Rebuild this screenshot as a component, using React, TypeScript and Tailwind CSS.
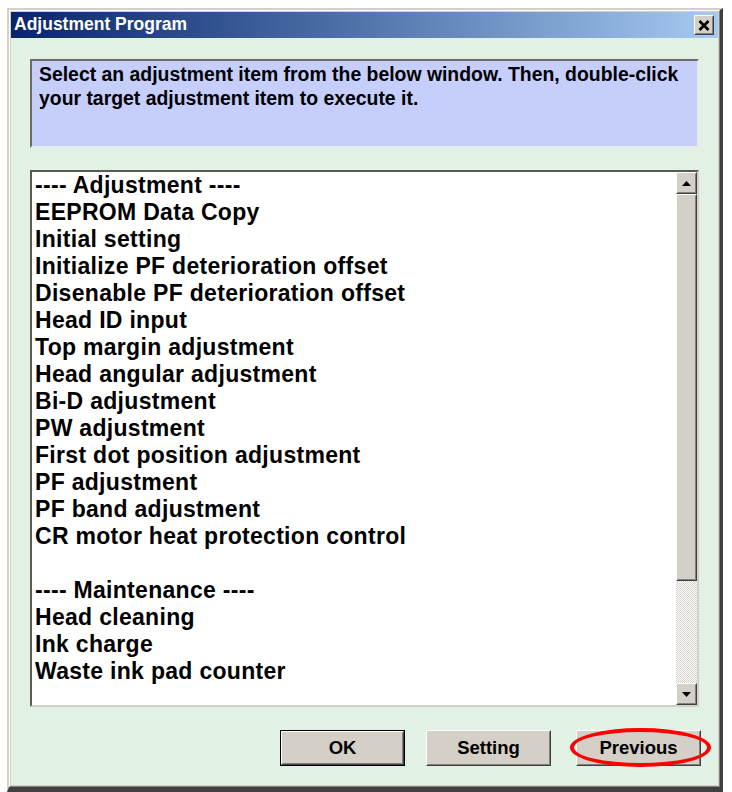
import React from "react";

const items = [
  "---- Adjustment ----",
  "EEPROM Data Copy",
  "Initial setting",
  "Initialize PF deterioration offset",
  "Disenable PF deterioration offset",
  "Head ID input",
  "Top margin adjustment",
  "Head angular adjustment",
  "Bi-D adjustment",
  "PW adjustment",
  "First dot position adjustment",
  "PF adjustment",
  "PF band adjustment",
  "CR motor heat protection control",
  "",
  "---- Maintenance ----",
  "Head cleaning",
  "Ink charge",
  "Waste ink pad counter",
];

const font = { fontFamily: '"Liberation Sans", Arial, sans-serif' };

function Raised({ className = "", children }: { className?: string; children?: React.ReactNode }) {
  return (
    <div className={`border border-t-white border-l-white border-r-[#404040] border-b-[#404040] ${className}`}>
      <div className="w-full h-full border border-t-[#d4d0c8] border-l-[#d4d0c8] border-r-[#808080] border-b-[#808080] bg-[#d4d0c8] flex items-center justify-center">
        {children}
      </div>
    </div>
  );
}

function Button({ label, isDefault }: { label: string; isDefault?: boolean }) {
  const inner = (
    <Raised className="w-full h-full">
      <span className="text-[18.5px] font-bold text-black leading-none" style={font}>
        {label}
      </span>
    </Raised>
  );
  if (isDefault) {
    return <div className="w-[125px] h-[36px] border border-black">{inner}</div>;
  }
  return <div className="w-[125px] h-[36px]">{inner}</div>;
}

export default function App() {
  return (
    <div className="w-[732px] h-[792px] bg-white overflow-hidden" style={font}>
      <div className="ml-[7px] mt-[8px] w-[716px] h-[784px] flex flex-col border-t-2 border-l-2 border-r-[3px] border-b-[5px] border-t-[#d4d0c8] border-l-[#d4d0c8] border-r-[#404040] border-b-[#404040]">
        <div className="flex-1 flex flex-col border border-t-white border-l-white border-r-[#808080] border-b-[#808080] bg-[#d4d0c8] p-px">
          {/* Title bar */}
          <div className="h-[26px] flex items-center justify-between pl-[3px] pr-[4px] bg-gradient-to-r from-[#0a246a] to-[#a6caf0]">
            <span className="text-white font-bold text-[17.5px] leading-none">Adjustment Program</span>
            <Raised className="w-[20px] h-[20px]">
              <svg width="12" height="11" viewBox="0 0 12 11">
                <path d="M1.5 1 L10.5 10 M10.5 1 L1.5 10" stroke="black" strokeWidth="2.6" />
              </svg>
            </Raised>
          </div>
          {/* Body */}
          <div className="flex-1 flex flex-col bg-[#e1f1e3] px-[19px] pt-[21px]">
            <div className="h-[89px] border-2 border-t-[#6b6b6b] border-l-[#6b6b6b] border-r-[#e8e8e8] border-b-[#e8e8e8] bg-[#c6cefc] pl-[7px] pt-px">
              <p className="text-[19.4px] font-bold leading-[24px] text-black">
                Select an adjustment item from the below window. Then, double-click
                <br />
                your target adjustment item to execute it.
              </p>
            </div>
            <div className="mt-[22px] h-[537px] w-[669px] flex border-2 border-t-[#5a5a5a] border-l-[#5a5a5a] border-r-[#d4d0c8] border-b-[#d4d0c8] bg-white">
              <div className="flex-1 pl-[3px] overflow-hidden">
                {items.map((t, i) => (
                  <div
                    key={i}
                    className="h-[27px] text-[23px] font-bold leading-[27px] tracking-[0.3px] text-black whitespace-nowrap"
                  >
                    {t}
                  </div>
                ))}
              </div>
              <div className="w-[21px] flex flex-col">
                <Raised className="h-[22px] w-full">
                  <svg width="9" height="5" viewBox="0 0 9 5">
                    <path d="M4.5 0 L9 5 L0 5 Z" fill="black" />
                  </svg>
                </Raised>
                <Raised className="h-[387px] w-full" />
                <div className="flex-1 bg-[image:repeating-conic-gradient(#d4d0c8_0%_25%,#ffffff_0%_50%)] bg-[length:2px_2px]" />
                <Raised className="h-[22px] w-full">
                  <svg width="9" height="5" viewBox="0 0 9 5">
                    <path d="M0 0 L9 0 L4.5 5 Z" fill="black" />
                  </svg>
                </Raised>
              </div>
            </div>
            <div className="mt-[23px] flex justify-end mr-[-2px]">
              <Button label="OK" isDefault />
              <div className="ml-[21px]">
                <Button label="Setting" />
              </div>
              <div className="ml-[25px] relative">
                <Button label="Previous" />
                <div className="absolute left-[-6px] top-[-2px] w-[141px] h-[39px] rounded-[50%] border-[4px] border-[#ff0000] pointer-events-none" />
              </div>
            </div>
          </div>
        </div>
      </div>
    </div>
  );
}
